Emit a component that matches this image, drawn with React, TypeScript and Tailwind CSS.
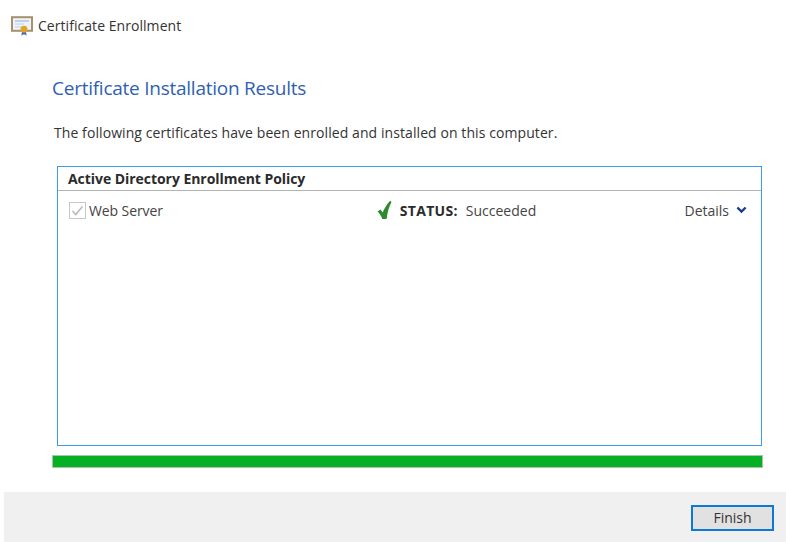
import React from "react";

function CertIcon() {
  return (
    <svg width="22" height="20" viewBox="0 0 22 20" className="shrink-0">
      <rect x="1" y="1.2" width="20" height="13.6" fill="#eef3f9" stroke="#a8906e" strokeWidth="2" />
      <path d="M4 5h14" stroke="#9dbce0" strokeWidth="1.2" />
      <path d="M4 8h9M4 11h6" stroke="#c0d2e8" strokeWidth="1" />
      <path d="M11.2 15l-.9 4.6 2.7-1.4 2.7 1.4-.9-4.6z" fill="#3a6cb8" />
      <circle cx="13" cy="13.2" r="3.4" fill="#dfa526" />
    </svg>
  );
}

export default function App() {
  return (
    <div className="flex h-[542px] w-[786px] flex-col overflow-hidden bg-white font-['Open_Sans','Noto_Sans',sans-serif] text-[#333]">
      <div className="ml-[11px] mt-4 flex h-5 items-center gap-[5px]">
        <CertIcon />
        <span className="text-[14px] leading-5 tracking-[0.05px] text-[#333]">Certificate Enrollment</span>
      </div>

      <h1 className="ml-[52px] mt-[39px] text-[19px] font-normal leading-[26px] tracking-[-0.25px] text-[#2f5fb3]">
        Certificate Installation Results
      </h1>

      <p className="ml-[54px] mt-[22px] text-[14px] leading-5 tracking-[0.08px] text-[#333]">
        The following certificates have been enrolled and installed on this computer.
      </p>

      <div className="ml-[57px] mt-[23px] flex h-[280px] w-[705px] flex-col border border-[#3d9bf0]">
        <div className="flex h-[24px] items-center border-b border-[#b4b4b4] pl-[10px] text-[14px] font-bold tracking-[-0.05px] text-[#2b2b2b]">
          Active Directory Enrollment Policy
        </div>
        <div className="mt-[9px] flex h-5 items-center text-[14px] text-[#444]">
          <span className="ml-[11px] flex h-[17px] w-[17px] items-center justify-center border border-[#c8c8c8] bg-white">
            <svg width="13" height="13" viewBox="0 0 13 13">
              <path d="M1.5 7l3.2 3.5L11.5 2.5" fill="none" stroke="#b8b8b8" strokeWidth="1.5" />
            </svg>
          </span>
          <span className="ml-[3px] tracking-[-0.1px]">Web Server</span>
          <svg width="15" height="20" viewBox="0 0 15 20" className="ml-[214px]">
            <path d="M0.5 11.5L3.6 9.6l2 3C7.6 8 10 4 13.2 0.8L14.5 2C12 6.5 10.4 12.5 9.6 19H5.2C4.4 16 2.6 13.5 0.5 11.5z" fill="#2f8a2f" />
          </svg>
          <span className="ml-2 font-bold tracking-[0.3px] text-[#2b2b2b]">STATUS:</span>
          <span className="ml-2">Succeeded</span>
          <span className="ml-auto">Details</span>
          <svg width="11" height="8" viewBox="0 0 11 8" className="ml-[7px] mr-[14px]">
            <path d="M1.4 1.5L5.5 5.6l4.1-4.1" fill="none" stroke="#123a8c" strokeWidth="2.2" />
          </svg>
        </div>
      </div>

      <div className="ml-[52px] mt-[9px] h-[13px] w-[711px] border border-[#a9c4a9] bg-[#06b025]" />

      <div className="ml-1 mt-6 flex h-[50px] items-start justify-end bg-[#f0f0f0] pr-3 pt-[13px]">
        <button className="h-[26px] w-[83px] border-2 border-[#0f78d4] bg-[#e1e1e1] text-[14px] leading-none text-[#333]">
          Finish
        </button>
      </div>
    </div>
  );
}
